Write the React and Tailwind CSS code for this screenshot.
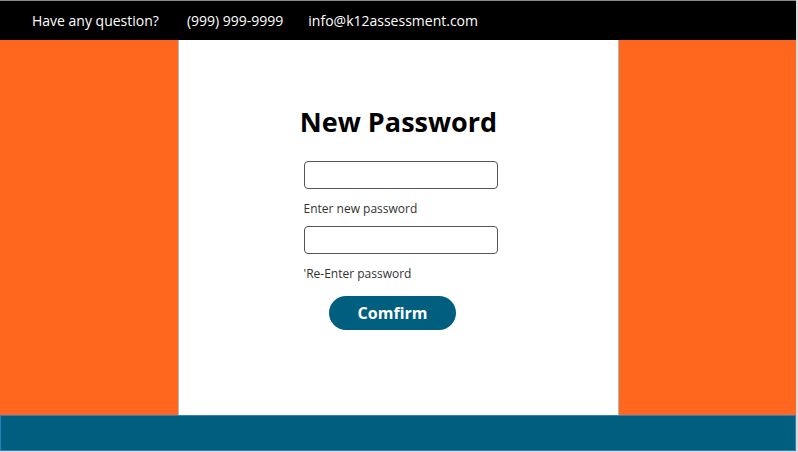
export default function App() {
  return (
    <div className="h-[452px] w-[798px] bg-[#d9d9d9]" style={{ fontFamily: '"Open Sans", "Noto Sans", sans-serif' }}>
      <div className="w-[796px] border-t border-[#8a8a8a] bg-white">
        <div className="flex h-[39px] items-center bg-black pl-[32px] text-[14px] text-white">
          <span>Have any question?</span>
          <span className="ml-[28px]">(999) 999-9999</span>
          <span className="ml-[25px]">info@k12assessment.com</span>
        </div>
        <div className="flex h-[375px] bg-[#ff671f]">
          <div className="w-[178px]" />
          <div className="flex w-[441px] flex-col items-center border-x border-[#b5b5b5] bg-white pt-[62px]">
            <h1 className="text-[27px] font-bold leading-[40px] text-black">New Password</h1>
            <div className="mt-[19px] ml-[4px] flex w-[194px] flex-col">
              <input type="password" className="h-[28px] rounded-[4px] border border-[#555] bg-white" />
              <label className="mt-[12px] text-[12px] leading-[16px] text-[#333]">Enter new password</label>
              <input type="password" className="mt-[9px] h-[28px] rounded-[4px] border border-[#555] bg-white" />
              <label className="mt-[12px] text-[12px] leading-[16px] text-[#333]">'Re-Enter password</label>
            </div>
            <button className="mt-[14px] mr-[12px] h-[34px] w-[127px] rounded-full bg-[#005e7f] text-[16px] font-bold text-white">
              Comfirm
            </button>
          </div>
          <div className="flex-1" />
        </div>
        <div className="h-[36px] border border-[#2f7fc1] bg-[#005e7f]" />
      </div>
    </div>
  );
}
